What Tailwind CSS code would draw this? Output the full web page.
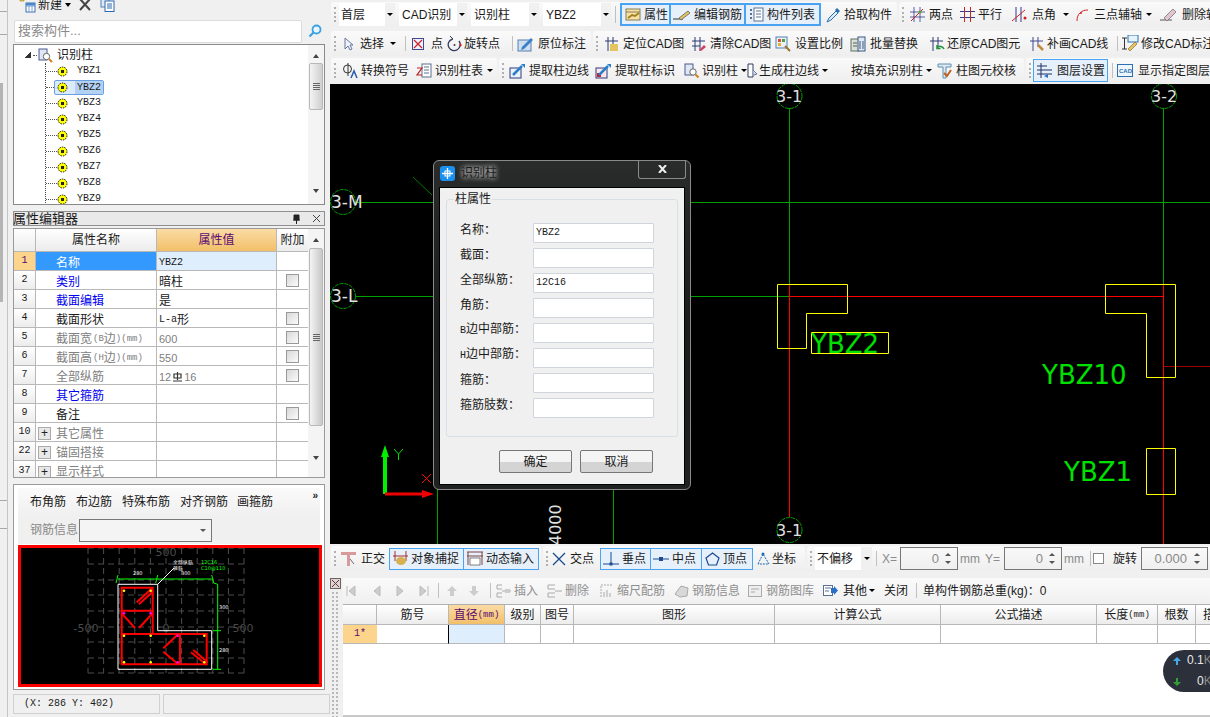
<!DOCTYPE html>
<html>
<head>
<meta charset="utf-8">
<script src="https://cdn.jsdelivr.net/npm/@tailwindcss/browser@4"></script>
<title>识别柱</title>
</head>
<body>
<div class="relative w-[1210px] h-[717px] overflow-hidden flex bg-[#f0f0f0] text-[12px] leading-[16px] text-[#1a1a1a] whitespace-nowrap font-['Liberation_Sans','Noto_Sans_CJK_SC',sans-serif]">

  <!-- far-left strip -->
  <div class="w-[8px] h-full shrink-0 flex flex-col border-r border-[#c4c4c4]">
    <div class="h-[12px] border-b border-[#a8a8a8]"></div>
    <div class="h-[23px] border-b border-[#a8a8a8]"></div>
    <div class="mt-[48px] h-[219px] w-[3px] bg-[#b4b4b4]"></div>
    <div class="mt-[198px] h-[1px] bg-[#a8a8a8]"></div>
    <div class="mt-[27px] h-[1px] bg-[#a8a8a8]"></div>
  </div>

  <!-- left panel -->
  <div class="w-[322px] h-full shrink-0 pl-[5px] pr-[5px] flex flex-col">
    <div class="h-[18px] overflow-hidden">
      <div class="flex items-center -mt-[3px] h-[16px] pl-[5px]">
        <svg class="w-[18px] h-[16px]" viewBox="0 0 18 16"><path d="M2 1h4v3H2z" fill="#e8c840" stroke="#a08020" stroke-width=".6"/><rect x="8" y="6" width="9" height="9" fill="#fff" stroke="#3a70b0"/><path d="M8 9h9M11 9v6M14 9v6" stroke="#7aa0d0"/><rect x="8" y="6" width="9" height="2.5" fill="#4a88c8"/></svg>
        <span class="ml-[2px]">新建</span>
        <span class="ml-[3px] w-0 h-0 border-x-[3px] border-t-[4px] border-x-transparent border-t-black"></span>
        <svg class="ml-[8px] w-[12px] h-[12px]" viewBox="0 0 12 12"><path d="M1 0l10 11M11 0L1 11" stroke="#444" stroke-width="2"/></svg>
        <svg class="ml-[9px] w-[15px] h-[14px]" viewBox="0 0 15 14"><rect x="1" y="0" width="8" height="9" fill="#dfe8f4" stroke="#5580b0"/><rect x="5" y="3" width="9" height="10.500" fill="#fff" stroke="#2a68b0"/><path d="M7 6h5M7 8h5M7 10h5" stroke="#2a68b0"/></svg>
      </div>
    </div>
    <div class="h-[26px] flex items-center">
      <div class="w-[288px] h-[23px] ml-[1px] bg-white border border-[#dcdcdc] rounded-[2px] pl-[3px] flex items-center text-[13px] text-[#8a8a8a]">搜索构件...</div>
      <svg class="ml-[6px] w-[14px] h-[14px]" viewBox="0 0 14 14"><circle cx="8.500" cy="5.500" r="4" fill="#eaf6ff" stroke="#3aa0e0" stroke-width="1.800"/><path d="M5.500 8.500L1.500 12.500" stroke="#3aa0e0" stroke-width="2.200"/></svg>
    </div>

    <!-- tree -->
    <div class="h-[161px] flex bg-white border border-[#8a8a8a] overflow-hidden">
      <div class="w-[295px] flex flex-col pt-[2px]">
        <div class="h-[16px] flex items-center pl-[11px] shrink-0">
          <span class="w-[6px] h-[6px] bg-[linear-gradient(135deg,transparent_50%,#333_50%)]"></span>
          <span class="ml-[2px] w-[4px] border-t border-dotted border-[#555]"></span>
          <svg class="ml-[1px] w-[15px] h-[15px]" viewBox="0 0 15 15"><rect x="1" y="1" width="8" height="11" fill="#dfe6f4" stroke="#4a5a90"/><circle cx="8.500" cy="8.500" r="3.200" fill="#fff" stroke="#666"/><path d="M11 11l3 3" stroke="#d08020" stroke-width="2"/></svg>
          <span class="ml-[4px]">识别柱</span>
        </div>
        <div class="ml-[31px] border-l border-dotted border-[#444] flex flex-col">
          <div class="h-[16px] flex items-center shrink-0"><span class="w-[11px] border-t border-dotted border-[#555]"></span><svg class="w-[11px] h-[11px]" viewBox="0 0 11 11"><circle cx="5.500" cy="5.500" r="4.500" fill="#ffff00" stroke="#111" stroke-dasharray="1.500 1"/><rect x="4" y="4" width="3" height="3" fill="#222"/></svg><span class="ml-[9px] font-['Liberation_Mono'] text-[10px]">YBZ1</span></div>
          <div class="h-[16px] flex items-center shrink-0"><span class="w-[8px] border-t border-dotted border-[#555]"></span><div class="h-[15px] w-[50px] flex items-center rounded-[2px] border border-[#6aa0e0] bg-[#dcebfb]"><svg class="ml-[2px] w-[11px] h-[11px]" viewBox="0 0 11 11"><circle cx="5.500" cy="5.500" r="4.500" fill="#ffff00" stroke="#111" stroke-dasharray="1.500 1"/><rect x="4" y="4" width="3" height="3" fill="#222"/></svg><span class="ml-[7px] pl-[2px] pr-[2px] h-full bg-[#b3d1f2] font-['Liberation_Mono'] text-[10px] leading-[13px]">YBZ2</span></div></div>
          <div class="h-[16px] flex items-center shrink-0"><span class="w-[11px] border-t border-dotted border-[#555]"></span><svg class="w-[11px] h-[11px]" viewBox="0 0 11 11"><circle cx="5.500" cy="5.500" r="4.500" fill="#ffff00" stroke="#111" stroke-dasharray="1.500 1"/><rect x="4" y="4" width="3" height="3" fill="#222"/></svg><span class="ml-[9px] font-['Liberation_Mono'] text-[10px]">YBZ3</span></div>
          <div class="h-[16px] flex items-center shrink-0"><span class="w-[11px] border-t border-dotted border-[#555]"></span><svg class="w-[11px] h-[11px]" viewBox="0 0 11 11"><circle cx="5.500" cy="5.500" r="4.500" fill="#ffff00" stroke="#111" stroke-dasharray="1.500 1"/><rect x="4" y="4" width="3" height="3" fill="#222"/></svg><span class="ml-[9px] font-['Liberation_Mono'] text-[10px]">YBZ4</span></div>
          <div class="h-[16px] flex items-center shrink-0"><span class="w-[11px] border-t border-dotted border-[#555]"></span><svg class="w-[11px] h-[11px]" viewBox="0 0 11 11"><circle cx="5.500" cy="5.500" r="4.500" fill="#ffff00" stroke="#111" stroke-dasharray="1.500 1"/><rect x="4" y="4" width="3" height="3" fill="#222"/></svg><span class="ml-[9px] font-['Liberation_Mono'] text-[10px]">YBZ5</span></div>
          <div class="h-[16px] flex items-center shrink-0"><span class="w-[11px] border-t border-dotted border-[#555]"></span><svg class="w-[11px] h-[11px]" viewBox="0 0 11 11"><circle cx="5.500" cy="5.500" r="4.500" fill="#ffff00" stroke="#111" stroke-dasharray="1.500 1"/><rect x="4" y="4" width="3" height="3" fill="#222"/></svg><span class="ml-[9px] font-['Liberation_Mono'] text-[10px]">YBZ6</span></div>
          <div class="h-[16px] flex items-center shrink-0"><span class="w-[11px] border-t border-dotted border-[#555]"></span><svg class="w-[11px] h-[11px]" viewBox="0 0 11 11"><circle cx="5.500" cy="5.500" r="4.500" fill="#ffff00" stroke="#111" stroke-dasharray="1.500 1"/><rect x="4" y="4" width="3" height="3" fill="#222"/></svg><span class="ml-[9px] font-['Liberation_Mono'] text-[10px]">YBZ7</span></div>
          <div class="h-[16px] flex items-center shrink-0"><span class="w-[11px] border-t border-dotted border-[#555]"></span><svg class="w-[11px] h-[11px]" viewBox="0 0 11 11"><circle cx="5.500" cy="5.500" r="4.500" fill="#ffff00" stroke="#111" stroke-dasharray="1.500 1"/><rect x="4" y="4" width="3" height="3" fill="#222"/></svg><span class="ml-[9px] font-['Liberation_Mono'] text-[10px]">YBZ8</span></div>
          <div class="h-[16px] flex items-center shrink-0"><span class="w-[11px] border-t border-dotted border-[#555]"></span><svg class="w-[11px] h-[11px]" viewBox="0 0 11 11"><circle cx="5.500" cy="5.500" r="4.500" fill="#ffff00" stroke="#111" stroke-dasharray="1.500 1"/><rect x="4" y="4" width="3" height="3" fill="#222"/></svg><span class="ml-[9px] font-['Liberation_Mono'] text-[10px]">YBZ9</span></div>
        </div>
      </div>
      <div class="w-[16px] bg-[#f4f4f4] flex flex-col items-center">
        <span class="mt-[9px] w-0 h-0 border-x-[3.500px] border-b-[4px] border-x-transparent border-b-[#444]"></span>
        <div class="mt-[5px] w-[14px] h-[47px] rounded-[2px] border border-[#b8b8b8] bg-gradient-to-r from-[#f4f4f4] to-[#cfcfcf] flex flex-col items-center justify-center gap-[1px]"><span class="w-[7px] h-px bg-[#666]"></span><span class="w-[7px] h-px bg-[#666]"></span><span class="w-[7px] h-px bg-[#666]"></span><span class="w-[7px] h-px bg-[#666]"></span></div>
        <span class="mt-[79px] w-0 h-0 border-x-[3.500px] border-t-[4px] border-x-transparent border-t-[#444]"></span>
      </div>
    </div>

    <!-- property header -->
    <div class="mt-[6px] h-[15px] flex items-center border border-[#909090] bg-[#e9e9e9]">
      <span class="text-[13px] leading-[13px] -ml-px">属性编辑器</span>
      <svg class="ml-auto w-[9px] h-[10px]" viewBox="0 0 9 10"><path d="M2 1h5v5H2zM1 6h7M4.500 6v4" fill="#222" stroke="#222"/></svg>
      <svg class="ml-[11px] mr-[3px] w-[9px] h-[9px]" viewBox="0 0 9 9"><path d="M1 1l7 7M8 1L1 8" stroke="#444"/></svg>
    </div>

    <!-- property grid -->
    <div class="mt-[2px] h-[250px] shrink-0 flex bg-white border border-[#9a9a9a] overflow-hidden">
      <div class="w-[294px] grid grid-cols-[22px_121px_120px_31px] grid-rows-[23px_repeat(12,19px)] content-start [&>div:nth-child(4n+2):nth-child(n+5)]:pt-[3px] [&>div:nth-child(4n+3):nth-child(n+5)]:pt-[3px]">
        <div class="bg-gradient-to-b from-white to-[#ececec] border-r border-b border-[#b8b8b8]"></div>
        <div class="bg-gradient-to-b from-white to-[#ececec] border-r border-b border-[#b8b8b8] flex items-center justify-center">属性名称</div>
        <div class="bg-gradient-to-b from-[#fbdca4] to-[#f2bf68] border-r border-b border-[#b8b8b8] flex items-center justify-center text-[#5a0a70]">属性值</div>
        <div class="bg-gradient-to-b from-white to-[#ececec] border-b border-[#b8b8b8] flex items-center justify-center">附加</div>

        <div class="bg-[#fdd48b] border-r border-b border-[#b8b8b8] flex items-center justify-center text-[#5a0a70] font-['Liberation_Mono'] text-[10px]">1</div>
        <div class="bg-[#3399ff] border-r border-b border-[#b8b8b8] flex items-center pl-[20px] text-white">名称</div>
        <div class="bg-[#dfeefc] border-r border-b border-[#b8b8b8] flex items-center pl-[2px] font-['Liberation_Mono'] text-[10px]">YBZ2</div>
        <div class="border-b border-[#b8b8b8]"></div>

        <div class="bg-gradient-to-b from-white to-[#ececec] border-r border-b border-[#b8b8b8] flex items-center justify-center font-['Liberation_Mono'] text-[10px]">2</div>
        <div class="border-r border-b border-[#b8b8b8] flex items-center pl-[20px] text-[#0000f0]">类别</div>
        <div class="border-r border-b border-[#b8b8b8] flex items-center pl-[2px]">暗柱</div>
        <div class="border-b border-[#b8b8b8] flex items-center justify-center"><span class="w-[13px] h-[13px] border border-[#999] bg-gradient-to-br from-[#d8d8d8] to-[#fbfbfb]"></span></div>

        <div class="bg-gradient-to-b from-white to-[#ececec] border-r border-b border-[#b8b8b8] flex items-center justify-center font-['Liberation_Mono'] text-[10px]">3</div>
        <div class="border-r border-b border-[#b8b8b8] flex items-center pl-[20px] text-[#0000f0]">截面编辑</div>
        <div class="border-r border-b border-[#b8b8b8] flex items-center pl-[2px]">是</div>
        <div class="border-b border-[#b8b8b8]"></div>

        <div class="bg-gradient-to-b from-white to-[#ececec] border-r border-b border-[#b8b8b8] flex items-center justify-center font-['Liberation_Mono'] text-[10px]">4</div>
        <div class="border-r border-b border-[#b8b8b8] flex items-center pl-[20px]">截面形状</div>
        <div class="border-r border-b border-[#b8b8b8] flex items-center pl-[2px]"><span class="font-['Liberation_Mono'] text-[10px]">L-a</span>形</div>
        <div class="border-b border-[#b8b8b8] flex items-center justify-center"><span class="w-[13px] h-[13px] border border-[#999] bg-gradient-to-br from-[#d8d8d8] to-[#fbfbfb]"></span></div>

        <div class="bg-gradient-to-b from-white to-[#ececec] border-r border-b border-[#b8b8b8] flex items-center justify-center font-['Liberation_Mono'] text-[10px]">5</div>
        <div class="border-r border-b border-[#b8b8b8] flex items-center pl-[20px] text-[#808080]">截面宽<span class="font-['Liberation_Mono'] text-[9px] ml-[1px]">(B</span>边<span class="font-['Liberation_Mono'] text-[9px]">)(mm)</span></div>
        <div class="border-r border-b border-[#b8b8b8] flex items-center pl-[2px] text-[#808080] text-[11px]">600</div>
        <div class="border-b border-[#b8b8b8] flex items-center justify-center"><span class="w-[13px] h-[13px] border border-[#999] bg-gradient-to-br from-[#d8d8d8] to-[#fbfbfb]"></span></div>

        <div class="bg-gradient-to-b from-white to-[#ececec] border-r border-b border-[#b8b8b8] flex items-center justify-center font-['Liberation_Mono'] text-[10px]">6</div>
        <div class="border-r border-b border-[#b8b8b8] flex items-center pl-[20px] text-[#808080]">截面高<span class="font-['Liberation_Mono'] text-[9px] ml-[1px]">(H</span>边<span class="font-['Liberation_Mono'] text-[9px]">)(mm)</span></div>
        <div class="border-r border-b border-[#b8b8b8] flex items-center pl-[2px] text-[#808080] text-[11px]">550</div>
        <div class="border-b border-[#b8b8b8] flex items-center justify-center"><span class="w-[13px] h-[13px] border border-[#999] bg-gradient-to-br from-[#d8d8d8] to-[#fbfbfb]"></span></div>

        <div class="bg-gradient-to-b from-white to-[#ececec] border-r border-b border-[#b8b8b8] flex items-center justify-center font-['Liberation_Mono'] text-[10px]">7</div>
        <div class="border-r border-b border-[#b8b8b8] flex items-center pl-[20px] text-[#808080]">全部纵筋</div>
        <div class="border-r border-b border-[#b8b8b8] flex items-center pl-[2px] text-[#808080] text-[11px]">12<svg class="mx-[2px] w-[9px] h-[10px]" viewBox="0 0 9 10"><path d="M1 2h7v4H1zM4.500 0v8M0 9h9" fill="none" stroke="#333" stroke-width="1.200"/></svg>16</div>
        <div class="border-b border-[#b8b8b8] flex items-center justify-center"><span class="w-[13px] h-[13px] border border-[#999] bg-gradient-to-br from-[#d8d8d8] to-[#fbfbfb]"></span></div>

        <div class="bg-gradient-to-b from-white to-[#ececec] border-r border-b border-[#b8b8b8] flex items-center justify-center font-['Liberation_Mono'] text-[10px]">8</div>
        <div class="border-r border-b border-[#b8b8b8] flex items-center pl-[20px] text-[#0000f0]">其它箍筋</div>
        <div class="border-r border-b border-[#b8b8b8]"></div>
        <div class="border-b border-[#b8b8b8]"></div>

        <div class="bg-gradient-to-b from-white to-[#ececec] border-r border-b border-[#b8b8b8] flex items-center justify-center font-['Liberation_Mono'] text-[10px]">9</div>
        <div class="border-r border-b border-[#b8b8b8] flex items-center pl-[20px]">备注</div>
        <div class="border-r border-b border-[#b8b8b8]"></div>
        <div class="border-b border-[#b8b8b8] flex items-center justify-center"><span class="w-[13px] h-[13px] border border-[#999] bg-gradient-to-br from-[#d8d8d8] to-[#fbfbfb]"></span></div>

        <div class="bg-gradient-to-b from-white to-[#ececec] border-r border-b border-[#b8b8b8] flex items-center justify-center font-['Liberation_Mono'] text-[10px]">10</div>
        <div class="border-r border-b border-[#b8b8b8] flex items-center pl-[2px] text-[#808080]"><span class="mr-[5px] w-[13px] h-[13px] border border-[#aaa] bg-[#e8e8e8] text-[#222] flex items-center justify-center leading-[11px]">+</span>其它属性</div>
        <div class="border-r border-b border-[#b8b8b8]"></div>
        <div class="border-b border-[#b8b8b8]"></div>

        <div class="bg-gradient-to-b from-white to-[#ececec] border-r border-b border-[#b8b8b8] flex items-center justify-center font-['Liberation_Mono'] text-[10px]">22</div>
        <div class="border-r border-b border-[#b8b8b8] flex items-center pl-[2px] text-[#808080]"><span class="mr-[5px] w-[13px] h-[13px] border border-[#aaa] bg-[#e8e8e8] text-[#222] flex items-center justify-center leading-[11px]">+</span>锚固搭接</div>
        <div class="border-r border-b border-[#b8b8b8]"></div>
        <div class="border-b border-[#b8b8b8]"></div>

        <div class="bg-gradient-to-b from-white to-[#ececec] border-r border-[#b8b8b8] flex items-center justify-center font-['Liberation_Mono'] text-[10px]">37</div>
        <div class="border-r border-[#b8b8b8] flex items-center pl-[2px] text-[#808080]"><span class="mr-[5px] w-[13px] h-[13px] border border-[#aaa] bg-[#e8e8e8] text-[#222] flex items-center justify-center leading-[11px]">+</span>显示样式</div>
        <div class="border-r border-[#b8b8b8]"></div>
        <div></div>
      </div>
      <div class="w-[16px] bg-[#f4f4f4] flex flex-col items-center">
        <span class="mt-[9px] w-0 h-0 border-x-[3.500px] border-b-[4px] border-x-transparent border-b-[#444]"></span>
        <div class="mt-[6px] w-[14px] h-[178px] rounded-[2px] border border-[#b8b8b8] bg-gradient-to-r from-[#f4f4f4] to-[#c8c8c8] flex flex-col items-center justify-center gap-[1px]"><span class="w-[7px] h-px bg-[#666]"></span><span class="w-[7px] h-px bg-[#666]"></span><span class="w-[7px] h-px bg-[#666]"></span><span class="w-[7px] h-px bg-[#666]"></span></div>
        <span class="mt-[30px] w-0 h-0 border-x-[3.500px] border-t-[4px] border-x-transparent border-t-[#444]"></span>
      </div>
    </div>

    <!-- rebar preview panel -->
    <div class="mt-[6px] h-[206px] shrink-0 border border-[#9a9a9a] bg-white pt-[3px] px-[4px] flex flex-col">
      <div class="h-[28px] bg-gradient-to-b from-[#fafafa] to-[#f0f0f0] flex items-center relative pl-[12px]">
        <span class="w-[43px]">布角筋</span><span class="ml-[3px] w-[43px]">布边筋</span><span class="ml-[3px] w-[54px]">特殊布筋</span><span class="ml-[4px] w-[54px]">对齐钢筋</span><span class="ml-[3px] w-[40px]">画箍筋</span>
        <span class="absolute right-[2px] top-[2px] text-[10px] leading-[12px] font-bold">»</span>
      </div>
      <div class="h-[28px] flex items-center pl-[12px] bg-[#f0f0f0]">
        <span class="text-[#8a8a8a] w-[49px]">钢筋信息</span>
        <div class="w-[133px] h-[23px] border border-[#777] bg-[#f4f4f4] flex items-center justify-end pr-[5px]"><span class="w-0 h-0 border-x-[3px] border-t-[3px] border-x-transparent border-t-[#555]"></span></div>
      </div>
      <svg class="w-[304px] h-[142px] mt-[1px] block bg-black shrink-0" viewBox="18 545 304 142">
        <g stroke="#4d4d4d" stroke-width="1" stroke-dasharray="6 4" fill="none">
          <path d="M88 548v125M103.600 548v125M119.200 548v125M134.800 548v125M150.400 548v125M166 548v125M181.600 548v125M197.200 548v125M212.800 548v125M228.400 548v125M244 548v125"/>
          <path d="M88 548h157M88 564h157M88 580h157M88 595h157M88 611h157M88 627h157M88 642h157M88 658h157M88 673h157"/>
        </g>
        <g class="font-['DejaVu_Sans']" font-size="11" fill="#4a4a4a" text-anchor="middle">
          <text x="166" y="556">500</text><text x="86" y="632">-500</text><text x="166" y="632">0</text><text x="243" y="632">500</text>
        </g>
        <path d="M118 584.300H157.700V630.700H211.700V669.300H118Z" fill="none" stroke="#fff"/>
        <g stroke="#0f0" fill="none">
          <path d="M118 579H211.700M217.700 584.300V669.300M118 575l-2 8M157.700 575l-2 8M211.700 575l2 8 4 1.300M213 630.700h8M213 669.300h8"/>
        </g>
        <path d="M157.700 584.300L174 568" stroke="#fff"/>
        <g fill="none" stroke="#f00" stroke-width="2">
          <path d="M121.700 587.700H152.700V634H206.700V664.300H121.700Z"/>
          <path d="M121.700 610.700H152.700M121.700 634H152.700M180 634V664.300"/>
          <path d="M136.700 602.300L152.700 587.700M139 604.300L152.700 591.700M121.700 613.300L135 628M139 628L152.700 613.300M163.300 648.300L178.300 634M163.300 651.700L178.300 664.300M191 652.300L206.700 665M193.300 650L207.700 662.300"/>
        </g>
        <g fill="#ff0">
          <circle cx="124" cy="590.700" r="1.300"/><circle cx="150.700" cy="590.700" r="1.300"/><circle cx="124" cy="635.700" r="1.300"/><circle cx="150.700" cy="635.700" r="1.300"/><circle cx="124" cy="662.300" r="1.300"/><circle cx="150.700" cy="662.300" r="1.300"/><circle cx="204.300" cy="635.700" r="1.300"/><circle cx="204.300" cy="662.300" r="1.300"/>
        </g>
        <g fill="#f0f">
          <circle cx="124" cy="613.300" r="1.300"/><circle cx="150.700" cy="613.300" r="1.300"/><circle cx="177.700" cy="635.700" r="1.300"/><circle cx="177.700" cy="662.300" r="1.300"/>
        </g>
        <g class="font-['DejaVu_Sans']" font-size="5" fill="#fff">
          <text x="133" y="575">280</text><text x="181" y="575">300</text><text x="219" y="609">300</text><text x="219" y="652">280</text>
          <text x="173" y="564">全部纵筋</text><text x="173" y="570">箍筋</text>
        </g>
        <g class="font-['DejaVu_Sans']" font-size="5" fill="#0f0"><text x="201" y="564">12C16</text><text x="201" y="570">C10@110</text></g>
        <rect x="19.500" y="546.500" width="301" height="139" fill="none" stroke="#f00" stroke-width="3"/>
      </svg>
    </div>

    <!-- status -->
    <div class="mt-[4px] h-[20px] shrink-0 flex gap-[3px] -mr-[5px]">
      <div class="w-[147px] border border-[#d0d0d0] pl-[10px] flex items-center font-['Liberation_Mono'] text-[10px]">(X: 286 Y: 402)</div>
      <div class="flex-1 border border-[#d0d0d0]"></div>
    </div>
  </div>

  <!-- right side -->
  <div class="w-[880px] h-full flex flex-col">
    <!-- row 1 -->
    <div class="h-[31px] pt-[2px] pl-[1px] flex gap-[2px]">
      <div class="w-[566px] h-[25px] flex items-center rounded-[3px] bg-gradient-to-b from-[#fafafa] to-[#eeeeee]">
        <div class="w-[8px] flex justify-center"><span class="w-[2px] h-[15px] border-l-2 border-dotted border-[#b0b0b0]"></span></div>
        <div class="w-[56px] h-[23px] flex items-center bg-white"><span class="flex-1 pl-[2px]">首层</span><span class="w-[10px] h-full bg-[#f0f0f0] flex items-center justify-center"><span class="w-0 h-0 border-x-[3px] border-t-[3px] border-x-transparent border-t-black"></span></span></div>
        <div class="ml-[4px] w-[68px] h-[23px] flex items-center bg-white"><span class="flex-1 pl-[3px]">CAD识别</span><span class="w-[10px] h-full bg-[#f0f0f0] flex items-center justify-center"><span class="w-0 h-0 border-x-[3px] border-t-[3px] border-x-transparent border-t-black"></span></span></div>
        <div class="ml-[4px] w-[68px] h-[23px] flex items-center bg-white"><span class="flex-1 pl-[3px]">识别柱</span><span class="w-[10px] h-full bg-[#f0f0f0] flex items-center justify-center"><span class="w-0 h-0 border-x-[3px] border-t-[3px] border-x-transparent border-t-black"></span></span></div>
        <div class="ml-[4px] w-[68px] h-[23px] flex items-center bg-white"><span class="flex-1 pl-[3px]">YBZ2</span><span class="w-[10px] h-full bg-[#f0f0f0] flex items-center justify-center"><span class="w-0 h-0 border-x-[3px] border-t-[3px] border-x-transparent border-t-black"></span></span></div>
        <div class="w-[9px] flex justify-center"><span class="w-px h-[17px] bg-[#c0c0c0]"></span></div>
        <div class="w-[51px] h-[23px] flex items-center gap-[3px] pl-[3px] border-2 border-[#4aa3f2] bg-[#e6f0fa]"><svg class="w-[16px] h-[15px] shrink-0" viewBox="0 0 16 15"><rect x="1" y="2" width="14" height="11" fill="#f6e2a8" stroke="#8a7a50"/><path d="M1 5h14" stroke="#8a7a50"/><path d="M3 11l4-3 3 1 4-3" stroke="#a08020" fill="none" stroke-width="2"/></svg><span>属性</span></div>
        <div class="w-[75px] h-[23px] flex items-center gap-[3px] pl-[2px] border-2 border-l-0 border-[#4aa3f2] bg-[#e6f0fa]"><svg class="w-[18px] h-[14px] shrink-0" viewBox="0 0 18 14"><path d="M0 11h10" stroke="#333"/><path d="M6 10L15 3l2 2-9 7z" fill="#e0c060" stroke="#555" stroke-width=".7"/></svg><span>编辑钢筋</span></div>
        <div class="w-[75px] h-[23px] flex items-center gap-[3px] pl-[3px] border-2 border-l-0 border-[#4aa3f2] bg-[#e6f0fa]"><svg class="w-[15px] h-[15px] shrink-0" viewBox="0 0 15 15"><rect x="5" y="1" width="9" height="13" fill="#fff" stroke="#5a7090"/><path d="M7 4h5M7 7h5M7 10h5" stroke="#5a7090"/><path d="M1 3h2M1 7h2M1 11h2" stroke="#5a7090" stroke-width="2"/></svg><span>构件列表</span></div>
        <div class="w-[76px] pl-[5px] flex items-center gap-[3px]"><svg class="w-[15px] h-[16px] shrink-0" viewBox="0 0 15 16"><path d="M1 15l2-4 7-7 2 2-7 7z" fill="#d8ecfa" stroke="#2a70b0"/><path d="M9 3l2-2 3 3-2 2z" fill="#2a70b0"/></svg><span>拾取构件</span></div>
      </div>
      <div class="flex-1 h-[25px] flex items-center rounded-l-[3px] bg-gradient-to-b from-[#fafafa] to-[#eeeeee] overflow-hidden">
        <div class="w-[8px] flex justify-center shrink-0"><span class="w-[2px] h-[15px] border-l-2 border-dotted border-[#b0b0b0]"></span></div>
        <div class="w-[53px] shrink-0 pl-[3px] flex items-center gap-[4px]"><svg class="w-[15px] h-[15px] shrink-0" viewBox="0 0 15 15"><path d="M4 0v15M10 0v15M0 5h15M0 10h15" stroke="#303a90" stroke-width=".8"/><path d="M1 14L13 2" stroke="#d02020"/><circle cx="10" cy="5" r="1.500" fill="#60a030"/></svg><span>两点</span></div>
        <div class="w-[51px] shrink-0 flex items-center gap-[3px]"><svg class="w-[15px] h-[15px] shrink-0" viewBox="0 0 15 15"><path d="M0 4.500h15M0 10.500h15" stroke="#303a90"/><path d="M4.500 0v15M10.500 0v15" stroke="#d02020"/></svg><span>平行</span></div>
        <div class="w-[64px] shrink-0 pl-px flex items-center gap-[5px]"><svg class="w-[15px] h-[15px] shrink-0" viewBox="0 0 15 15"><path d="M4 0v15M9 0v15" stroke="#303a90"/><path d="M0 14L13 3" stroke="#d02020"/><circle cx="13" cy="11" r="1.500" fill="#d02020"/></svg><span>点角</span><span class="ml-[2px] w-0 h-0 border-x-[3px] border-t-[3px] border-x-transparent border-t-black"></span></div>
        <div class="w-[85px] shrink-0 flex items-center gap-[4px]"><svg class="w-[15px] h-[15px] shrink-0" viewBox="0 0 15 15"><path d="M2 14C2 7 6 3 13 3" stroke="#d02020" fill="none"/><circle cx="6" cy="6" r="1" fill="#d02020"/></svg><span>三点辅轴</span><span class="w-0 h-0 border-x-[3px] border-t-[3px] border-x-transparent border-t-black"></span></div>
        <div class="flex items-center gap-[4px]"><svg class="w-[18px] h-[15px] shrink-0" viewBox="0 0 18 15"><path d="M0 13h12" stroke="#555"/><path d="M4 11l9-9 3 3-9 9z" fill="#e4c4d0" stroke="#666" stroke-width=".7"/></svg><span>删除辅轴</span></div>
      </div>
    </div>

    <!-- row 2 -->
    <div class="h-[27px] pl-[1px] flex gap-[2px]">
      <div class="w-[260px] h-[25px] flex items-center rounded-[3px] bg-gradient-to-b from-[#fafafa] to-[#eeeeee]">
        <div class="w-[8px] flex justify-center"><span class="w-[2px] h-[15px] border-l-2 border-dotted border-[#b0b0b0]"></span></div>
        <div class="w-[62px] pl-[4px] flex items-center gap-[6px]"><svg class="w-[11px] h-[14px] shrink-0" viewBox="0 0 11 14"><path d="M2 1v11l3-3 2 4 2-1-2-4h3z" fill="#eef2fa" stroke="#6a78a0"/></svg><span>选择</span><span class="w-0 h-0 border-x-[3px] border-t-[3px] border-x-transparent border-t-black"></span></div>
        <div class="w-[9px] flex justify-center"><span class="w-px h-[15px] bg-[#c0c0c0]"></span></div>
        <div class="w-[37px] pl-[2px] flex items-center gap-[7px]"><svg class="w-[12px] h-[12px] shrink-0" viewBox="0 0 12 12"><rect x=".5" y=".5" width="11" height="11" fill="#eef2fa" stroke="#404a90"/><path d="M2 2l8 8M10 2l-8 8" stroke="#d02030" stroke-width="1.200"/></svg><span>点</span></div>
        <div class="w-[62px] flex items-center gap-[1px]"><svg class="w-[16px] h-[16px] shrink-0" viewBox="0 0 16 16"><path d="M5 3A6 6 0 1 0 12 5" fill="none" stroke="#303a60" stroke-width="1.300"/><path d="M3 0l3 3-3 2" fill="none" stroke="#303a60"/><circle cx="7.500" cy="9" r="1" fill="#303a60"/><path d="M12 9h3M13.500 7.500v3" stroke="#d02020"/></svg><span>旋转点</span></div>
        <div class="w-[6px] flex justify-center"><span class="w-px h-[15px] bg-[#c0c0c0]"></span></div>
        <div class="w-[76px] pl-[2px] flex items-center gap-[4px]"><svg class="w-[17px] h-[16px] shrink-0" viewBox="0 0 17 16"><rect x="1" y="4" width="13" height="11" fill="#cfdff0" stroke="#5580b0"/><path d="M5 11L14 2l2 2-9 9-3 1z" fill="#3a80c8"/></svg><span>原位标注</span></div>
      </div>
      <div class="flex-1 h-[25px] flex items-center rounded-l-[3px] bg-gradient-to-b from-[#fafafa] to-[#eeeeee] overflow-hidden">
        <div class="w-[8px] flex justify-center shrink-0"><span class="w-[2px] h-[15px] border-l-2 border-dotted border-[#b0b0b0]"></span></div>
        <div class="w-[87px] shrink-0 pl-[3px] flex items-center gap-[4px]"><svg class="w-[15px] h-[16px] shrink-0" viewBox="0 0 15 16"><path d="M1 5h13M4 1v14M9 1v14" stroke="#2a3a70"/><rect x="6" y="8" width="8" height="7" fill="#e4c460"/></svg><span>定位CAD图</span></div>
        <div class="w-[87px] shrink-0 pl-[3px] flex items-center gap-[4px]"><svg class="w-[15px] h-[16px] shrink-0" viewBox="0 0 15 16"><path d="M1 5h13M4 1v14M9 1v14M1 10h8" stroke="#2a3a70"/><path d="M8 14l5-5 2 2-5 4z" fill="#d04060"/></svg><span>清除CAD图</span></div>
        <div class="w-[75px] shrink-0 flex items-center gap-[4px]"><svg class="w-[16px] h-[16px] shrink-0" viewBox="0 0 16 16"><rect x="1" y="1" width="11" height="11" fill="#eaf2fa" stroke="#5580b0"/><rect x="3" y="3" width="3" height="3" fill="#e05030"/><rect x="7" y="3" width="3" height="3" fill="#50a050"/><rect x="3" y="7" width="3" height="3" fill="#e8b030"/><path d="M10 10l5 5" stroke="#a07030" stroke-width="2"/></svg><span>设置比例</span></div>
        <div class="w-[76px] shrink-0 flex items-center gap-[4px]"><svg class="w-[16px] h-[16px] shrink-0" viewBox="0 0 16 16"><rect x="1" y="3" width="8" height="12" fill="#d8e0d8" stroke="#607060"/><path d="M3 7h4M3 10h4" stroke="#506050"/><rect x="8" y="1" width="7" height="14" fill="#dfe8f4" stroke="#3a5a80"/><path d="M10 5v8M13 5v8" stroke="#3a5a80"/></svg><span>批量替换</span></div>
        <div class="w-[100px] shrink-0 pl-[3px] flex items-center gap-[2px]"><svg class="w-[16px] h-[16px] shrink-0" viewBox="0 0 16 16"><path d="M1 5h13M4 1v14M9 1v9" stroke="#2a3a70"/><path d="M8 12a4 4 0 0 1 7 1M8 9v3.500h3.500" stroke="#209040" fill="none" stroke-width="1.500"/></svg><span>还原CAD图元</span></div>
        <div class="w-[88px] shrink-0 pl-[3px] flex items-center gap-[2px]"><svg class="w-[16px] h-[16px] shrink-0" viewBox="0 0 16 16"><path d="M1 5h13M4 1v14M9 1v10" stroke="#404a90"/><path d="M9 9l5 5" stroke="#c08a40" stroke-width="2.500"/></svg><span>补画CAD线</span></div>
        <div class="w-[6px] shrink-0 flex justify-center"><span class="w-px h-[15px] bg-[#c0c0c0]"></span></div>
        <div class="shrink-0 pl-[1px] flex items-center gap-[2px]"><svg class="w-[18px] h-[17px] shrink-0" viewBox="0 0 18 17"><path d="M1 3h5M3.500 3v11M1 14h5" stroke="#333"/><rect x="7" y="0" width="10" height="7" fill="#e8f2fb" stroke="#2a70b0"/><path d="M7 14l7-7 2 2-7 7z" fill="#e4c460" stroke="#806020" stroke-width=".6"/></svg><span>修改CAD标注</span></div>
      </div>
    </div>

    <!-- row 3 -->
    <div class="h-[26px] pl-[1px] flex gap-[2px]">
      <div class="w-[166px] h-[25px] flex items-center rounded-[3px] bg-gradient-to-b from-[#fafafa] to-[#eeeeee]">
        <div class="w-[8px] flex justify-center"><span class="w-[2px] h-[15px] border-l-2 border-dotted border-[#b0b0b0]"></span></div>
        <div class="w-[74px] pl-[3px] flex items-center gap-[3px]"><svg class="w-[16px] h-[16px] shrink-0" viewBox="0 0 16 16"><ellipse cx="5.500" cy="6" rx="4" ry="4" fill="none" stroke="#333"/><path d="M6 0v13" stroke="#333"/><path d="M9 15l3-7 3 7" fill="none" stroke="#2a5ab0" stroke-width="1.500"/></svg><span>转换符号</span></div>
        <div class="w-[84px] pl-[3px] flex items-center gap-[3px]"><svg class="w-[16px] h-[15px] shrink-0" viewBox="0 0 16 15"><rect x="6" y="1" width="9" height="13" fill="#fff" stroke="#5a7090"/><path d="M8 4h5M8 7h5M8 10h5" stroke="#5a7090"/><path d="M1 5h5L1 12h5" fill="none" stroke="#c02020" stroke-width="1.200"/></svg><span>识别柱表</span><span class="ml-[1px] w-0 h-0 border-x-[3px] border-t-[3px] border-x-transparent border-t-black"></span></div>
      </div>
      <div class="w-[525px] h-[25px] flex items-center rounded-[3px] bg-gradient-to-b from-[#fafafa] to-[#eeeeee]">
        <div class="w-[8px] flex justify-center"><span class="w-[2px] h-[15px] border-l-2 border-dotted border-[#b0b0b0]"></span></div>
        <div class="w-[85px] pl-[2px] flex items-center gap-[3px]"><svg class="w-[17px] h-[16px] shrink-0" viewBox="0 0 17 16"><rect x="1" y="5" width="11" height="10" fill="#eaf2fa" stroke="#303a80"/><path d="M4 12L13 3" stroke="#2a80c8" stroke-width="2.500"/><path d="M12 1h4v4" fill="#2a80c8"/></svg><span>提取柱边线</span></div>
        <div class="w-[89px] pl-[3px] flex items-center gap-[3px]"><svg class="w-[17px] h-[16px] shrink-0" viewBox="0 0 17 16"><rect x="1" y="5" width="11" height="10" fill="#fae8ea" stroke="#303a80"/><rect x="2" y="10" width="4" height="4" fill="#c02030"/><path d="M4 12L13 3" stroke="#2a80c8" stroke-width="2.500"/><path d="M12 1h4v4" fill="#2a80c8"/></svg><span>提取柱标识</span></div>
        <div class="w-[64px] pl-[3px] flex items-center gap-[2px]"><svg class="w-[16px] h-[16px] shrink-0" viewBox="0 0 16 16"><rect x="1" y="1" width="8" height="11" fill="#dfe6f4" stroke="#4a5a90"/><circle cx="9" cy="9" r="3.200" fill="#fff" stroke="#666"/><path d="M11.500 11.500l3 3" stroke="#d08020" stroke-width="2"/></svg><span>识别柱</span><span class="ml-[1px] w-0 h-0 border-x-[3px] border-t-[3px] border-x-transparent border-t-black"></span></div>
        <div class="w-[100px] pl-[2px] flex items-center gap-[1px]"><svg class="w-[11px] h-[15px] shrink-0" viewBox="0 0 11 15"><path d="M1 1h5v13H1z" fill="#fff" stroke="#303a60"/><path d="M6 7l4 4-3 1" fill="#cfdff0" stroke="#6a78a0"/></svg><span>生成柱边线</span><span class="ml-[2px] w-0 h-0 border-x-[3px] border-t-[3px] border-x-transparent border-t-black"></span></div>
        <div class="w-[90px] pl-[6px] flex items-center gap-[2px]"><span>按填充识别柱</span></div>
        <div class="-ml-[9px] w-[9px] flex items-center"><span class="w-0 h-0 border-x-[3px] border-t-[3px] border-x-transparent border-t-black"></span></div>
        <div class="w-[89px] pl-[2px] flex items-center gap-[4px]"><svg class="w-[15px] h-[16px] shrink-0" viewBox="0 0 15 16"><path d="M1 1h13v3H9v11H6V4H1z" fill="#dfe8f0" stroke="#5a90b0"/><path d="M7 10l3 3 4-6" fill="none" stroke="#c06020" stroke-width="2"/></svg><span>柱图元校核</span></div>
      </div>
      <div class="flex-1 h-[25px] flex items-center rounded-l-[3px] bg-gradient-to-b from-[#fafafa] to-[#eeeeee] overflow-hidden">
        <div class="w-[7px] flex justify-center shrink-0"><span class="w-[2px] h-[15px] border-l-2 border-dotted border-[#b0b0b0]"></span></div>
        <div class="w-[75px] h-[23px] shrink-0 flex items-center gap-[5px] pl-[3px] border border-[#4aa3f2] bg-[#e6f0fa]"><svg class="w-[15px] h-[15px] shrink-0" viewBox="0 0 15 15"><path d="M4 0v15" stroke="#203060"/><path d="M0 3h10M0 7h15M0 11h15" stroke="#203060"/><path d="M7 13l4-2v4z" fill="#2a70c0"/></svg><span>图层设置</span></div>
        <div class="w-[9px] shrink-0 flex justify-center"><span class="w-px h-[15px] bg-[#c0c0c0]"></span></div>
        <div class="shrink-0 flex items-center gap-[3px]"><svg class="w-[16px] h-[13px] shrink-0" viewBox="0 0 16 13"><rect x=".5" y=".5" width="15" height="12" fill="#eef6fd" stroke="#2a70b0"/></svg><span class="-ml-[18px] w-[15px] text-[6px] leading-[10px] font-bold text-[#2a70b0] text-center">CAD</span><span class="ml-[2px]">显示指定图层</span></div>
      </div>
    </div>

    <!-- CAD canvas -->
    <div class="h-[460px] bg-black shrink-0 overflow-hidden">
      <svg class="block w-[880px] h-[460px]" viewBox="330 84 880 460">
        <g fill="none" stroke="#00a000" stroke-width="1">
          <path d="M356 202.500H1210M356 296.500H789.500"/>
          <path d="M789.500 108V284M1163.500 108V284"/>
          <path d="M437.500 430V544M613.500 430V544"/>
          <path d="M413 177L432 195" stroke="#007a00"/>
          <circle cx="343" cy="202" r="12.500" stroke-dasharray="4 1"/><circle cx="343" cy="296" r="12.500" stroke-dasharray="4 1"/>
          <circle cx="789.500" cy="96" r="12.500" stroke-dasharray="4 1"/><circle cx="1164" cy="96" r="12.500" stroke-dasharray="4 1"/>
          <circle cx="789.500" cy="530" r="12.500" stroke-dasharray="4 1"/>
        </g>
        <g fill="none" stroke="#ff0000" stroke-width="1">
          <path d="M789.500 296.500H1163.500M789.500 284V517M1163.500 284V544"/>
          <path d="M422 474L431 483M431 474L422 483"/>
        </g>
        <path d="M1163.500 366.500H1210" stroke="#a00000"/>
        <g fill="none" stroke="#ffff00" stroke-width="1">
          <path d="M777.500 284.500H847.500V313.500H806.500V348.500H777.500Z"/>
          <path d="M811.500 332.500H888.500V353.500H811.500Z"/>
          <path d="M1105.500 284.500H1175.500V377.500H1146.500V313.500H1105.500Z"/>
          <path d="M1146.500 448.500H1175.500V494.500H1146.500Z"/>
        </g>
        <g class="font-['DejaVu_Sans']" font-size="26" fill="#00e000">
          <text x="811" y="353">YBZ2</text><text x="1042" y="384">YBZ10</text><text x="1064" y="481">YBZ1</text>
        </g>
        <g class="font-['DejaVu_Sans']" font-size="17" fill="#e0e0e0">
          <text x="331" y="208">3-M</text><text x="331" y="302">3-L</text>
          <text x="776" y="102" font-size="16">3-1</text><text x="1151" y="102" font-size="16">3-2</text>
          <text x="776" y="536" font-size="16">3-1</text>
          <text transform="translate(561 545) rotate(-90)" font-size="16" fill="#e0e0e0">4000</text>
        </g>
        <path d="M385 445l-4 12h2V494h4V457H389z" fill="#00f000"/>
        <path d="M385 492.500H422V490l12 4-12 4v-2.500H385z" fill="#f00000"/>
        <path d="M394 449l4.500 5 4.500-5M398.500 454v6" stroke="#00e000" fill="none"/>
      </svg>
    </div>

    <!-- snap toolbar -->
    <div class="h-[28px] pt-[2px] pl-[1px] flex gap-[2px] shrink-0">
      <div class="w-[210px] h-[25px] flex items-center rounded-[3px] bg-gradient-to-b from-[#fafafa] to-[#eeeeee]">
        <div class="w-[8px] flex justify-center"><span class="w-[2px] h-[15px] border-l-2 border-dotted border-[#b0b0b0]"></span></div>
        <div class="w-[50px] pl-[2px] flex items-center gap-[4px]"><svg class="w-[16px] h-[15px] shrink-0" viewBox="0 0 16 15"><path d="M0 1h15v3H9v11H6V4H0z" fill="#d89a9a"/><path d="M9 8l4 5" stroke="#667"/></svg><span>正交</span></div>
        <div class="w-[75px] h-[22px] flex items-center gap-[3px] pl-[3px] border border-[#4aa3f2] bg-[#e6f0fa]"><svg class="w-[15px] h-[15px] shrink-0" viewBox="0 0 15 15"><path d="M2 0v10M13 0v10M0 5h15" stroke="#a03030"/><ellipse cx="8" cy="10" rx="5" ry="4" fill="#d8b050"/></svg><span>对象捕捉</span></div>
        <div class="w-[75px] h-[22px] flex items-center gap-[3px] pl-[3px] border border-l-0 border-[#4aa3f2] bg-[#e6f0fa]"><svg class="w-[16px] h-[15px] shrink-0" viewBox="0 0 16 15"><path d="M0 1h16M0 5h16" stroke="#804040"/><path d="M1 1v13M15 1v13" stroke="#804040"/><rect x="3" y="7" width="10" height="7" fill="#fff" stroke="#333" stroke-width=".6"/></svg><span>动态输入</span></div>
      </div>
      <div class="w-[262px] h-[25px] flex items-center rounded-[3px] bg-gradient-to-b from-[#fafafa] to-[#eeeeee]">
        <div class="w-[7px] flex justify-center"><span class="w-[2px] h-[15px] border-l-2 border-dotted border-[#b0b0b0]"></span></div>
        <div class="w-[50px] pl-[2px] flex items-center gap-[4px]"><svg class="w-[14px] h-[14px] shrink-0" viewBox="0 0 14 14"><path d="M1 1l12 12M13 1L1 13" stroke="#1a4a90" stroke-width="1.300"/></svg><span>交点</span></div>
        <div class="w-[51px] h-[22px] flex items-center gap-[3px] pl-[2px] border border-[#4aa3f2] bg-[#e6f0fa]"><svg class="w-[16px] h-[14px] shrink-0" viewBox="0 0 16 14"><path d="M8 0v12M0 12h16" stroke="#1a4a90"/><rect x="6.500" y="10.500" width="3" height="3" fill="#1a4a90"/></svg><span>垂点</span></div>
        <div class="w-[51px] h-[22px] flex items-center gap-[3px] pl-[2px] border border-l-0 border-[#4aa3f2] bg-[#e6f0fa]"><svg class="w-[16px] h-[10px] shrink-0" viewBox="0 0 16 10"><path d="M0 5h16" stroke="#1a4a90"/><rect x="6" y="3" width="4" height="4" fill="#1a4a90"/></svg><span>中点</span></div>
        <div class="w-[51px] h-[22px] flex items-center gap-[3px] pl-[3px] border border-l-0 border-[#4aa3f2] bg-[#e6f0fa]"><svg class="w-[15px] h-[14px] shrink-0" viewBox="0 0 15 14"><path d="M7.500 1L14 6l-2.500 7h-8L1 6z" fill="none" stroke="#1a4a90" stroke-width="1.200"/></svg><span>顶点</span></div>
        <div class="w-[52px] pl-[3px] flex items-center gap-[1px]"><svg class="w-[15px] h-[15px] shrink-0" viewBox="0 0 15 15"><path d="M2 13L7 3l6 10z" fill="none" stroke="#1a6ab0" stroke-dasharray="2 1"/><circle cx="7" cy="3" r="1.500" fill="#1a6ab0"/></svg><span>坐标</span></div>
      </div>
      <div class="flex-1 h-[25px] flex items-center rounded-l-[3px] bg-gradient-to-b from-[#fafafa] to-[#eeeeee] overflow-hidden text-[#8a8a8a]">
        <div class="w-[8px] flex justify-center shrink-0"><span class="w-[2px] h-[15px] border-l-2 border-dotted border-[#b0b0b0]"></span></div>
        <div class="w-[57px] h-[23px] shrink-0 flex items-center bg-white text-[#1a1a1a]"><span class="flex-1 pl-[2px]">不偏移</span><span class="w-[11px] h-full bg-[#f0f0f0] flex items-center justify-center"><span class="w-0 h-0 border-x-[3px] border-t-[3px] border-x-transparent border-t-black"></span></span></div>
        <div class="w-[9px] shrink-0 flex justify-center"><span class="w-px h-[15px] bg-[#c0c0c0]"></span></div>
        <span class="w-[19px] shrink-0 pl-px">X=</span>
        <div class="w-[58px] h-[23px] shrink-0 border border-[#777] flex items-center justify-end"><span class="text-[13px]">0</span><span class="w-[18px] flex flex-col items-center gap-[5px]"><span class="w-0 h-0 border-x-[3px] border-b-[3px] border-x-transparent border-b-[#555]"></span><span class="w-0 h-0 border-x-[3px] border-t-[3px] border-x-transparent border-t-[#555]"></span></span></div>
        <span class="w-[27px] shrink-0 pl-[2px]">mm</span>
        <span class="w-[19px] shrink-0">Y=</span>
        <div class="w-[58px] h-[23px] shrink-0 border border-[#777] flex items-center justify-end"><span class="text-[13px]">0</span><span class="w-[18px] flex flex-col items-center gap-[5px]"><span class="w-0 h-0 border-x-[3px] border-b-[3px] border-x-transparent border-b-[#555]"></span><span class="w-0 h-0 border-x-[3px] border-t-[3px] border-x-transparent border-t-[#555]"></span></span></div>
        <span class="w-[25px] shrink-0 pl-[2px]">mm</span>
        <div class="w-[6px] shrink-0 flex justify-center"><span class="w-px h-[15px] bg-[#c0c0c0]"></span></div>
        <span class="w-[11px] h-[11px] shrink-0 border border-[#888] bg-white"></span>
        <span class="w-[37px] shrink-0 pl-[9px] text-[#1a1a1a]">旋转</span>
        <div class="w-[67px] h-[23px] shrink-0 border border-[#777] flex items-center justify-end"><span class="text-[13px]">0.000</span><span class="w-[20px] flex flex-col items-center gap-[5px]"><span class="w-0 h-0 border-x-[3px] border-b-[3px] border-x-transparent border-b-[#555]"></span><span class="w-0 h-0 border-x-[3px] border-t-[3px] border-x-transparent border-t-[#555]"></span></span></div>
      </div>
    </div>

    <!-- bottom area -->
    <div class="flex-1 flex mt-[6px] min-h-0">
      <div class="w-[13px] shrink-0 flex flex-col items-center">
        <svg class="w-[11px] h-[11px] shrink-0 -ml-[2px]" viewBox="0 0 11 11"><rect x=".5" y=".5" width="10" height="10" fill="#e8d0d0" stroke="#666"/><path d="M2 2l7 7M9 2L2 9" stroke="#444"/></svg>
        <div class="mt-[2px] w-[9px] -ml-[2px] flex-1 bg-[radial-gradient(circle,#b8b8b8_1px,transparent_1.200px)] bg-[length:4px_4px]"></div>
      </div>
      <div class="flex-1 flex flex-col min-w-0">
        <div class="h-[27px] pb-px shrink-0 flex items-center bg-gradient-to-b from-[#fafafa] to-[#f0f0f0] text-[#8f8f8f] border-b border-[#b0b0b0] pl-[3px]">
          <svg class="w-[10px] h-[12px] shrink-0" viewBox="0 0 10 12"><path d="M1 1v10M9 1L3 6l6 5z" stroke="#bbb" fill="#ccc"/></svg>
          <svg class="ml-[16px] w-[10px] h-[12px] shrink-0" viewBox="0 0 10 12"><path d="M8 1L2 6l6 5z" fill="#ccc" stroke="#bbb"/></svg>
          <svg class="ml-[13px] w-[10px] h-[12px] shrink-0" viewBox="0 0 10 12"><path d="M2 1l6 5-6 5z" fill="#ccc" stroke="#bbb"/></svg>
          <svg class="ml-[14px] w-[10px] h-[12px] shrink-0" viewBox="0 0 10 12"><path d="M9 1v10M1 1l6 5-6 5z" stroke="#bbb" fill="#ccc"/></svg>
          <span class="ml-[9px] w-px h-[15px] bg-[#c0c0c0] shrink-0"></span>
          <svg class="ml-[8px] w-[10px] h-[10px] shrink-0" viewBox="0 0 10 10"><path d="M5 0l5 5H7v5H3V5H0z" fill="#ccc"/></svg>
          <svg class="ml-[12px] w-[10px] h-[10px] shrink-0" viewBox="0 0 10 10"><path d="M5 10l5-5H7V0H3v5H0z" fill="#ccc"/></svg>
          <span class="ml-[11px] w-px h-[15px] bg-[#c0c0c0] shrink-0"></span>
          <div class="ml-[5px] w-[51px] flex items-center gap-[2px] shrink-0"><svg class="w-[16px] h-[14px] shrink-0" viewBox="0 0 16 14"><path d="M6 1H1v4h5M6 9H1v4h5M6 7h9" fill="none" stroke="#aaa"/><rect x="9" y="5" width="5" height="4" fill="#ccc"/></svg><span>插入</span></div>
          <div class="w-[53px] flex items-center gap-[2px] shrink-0"><svg class="w-[16px] h-[14px] shrink-0" viewBox="0 0 16 14"><path d="M8 1H1v4h7M8 9H1v4h7M8 7h7" fill="none" stroke="#aaa"/></svg><span>删除</span></div>
          <div class="w-[74px] flex items-center gap-[3px] shrink-0"><svg class="w-[14px] h-[14px] shrink-0" viewBox="0 0 14 14"><path d="M1 13V1h12" fill="none" stroke="#aaa" stroke-dasharray="2 1"/><path d="M4 13V8M7 13V6M10 13V9" stroke="#aaa"/></svg><span>缩尺配筋</span></div>
          <div class="w-[74px] flex items-center gap-[3px] shrink-0"><svg class="w-[15px] h-[14px] shrink-0" viewBox="0 0 15 14"><path d="M1 10L7 2l7 2-1 8-7 1z" fill="#d8d8d8" stroke="#aaa"/></svg><span>钢筋信息</span></div>
          <div class="w-[75px] flex items-center gap-[4px] shrink-0"><svg class="w-[14px] h-[12px] shrink-0" viewBox="0 0 14 12"><rect x=".5" y=".5" width="13" height="11" fill="#eee" stroke="#aaa"/><path d="M3 4h8M3 7h4" stroke="#aaa"/></svg><span>钢筋图库</span></div>
          <div class="w-[61px] flex items-center gap-[1px] shrink-0 text-[#1a1a1a]"><svg class="w-[15px] h-[13px] shrink-0" viewBox="0 0 15 13"><rect x=".5" y="1.500" width="9" height="10" fill="#fff" stroke="#5a7090"/><path d="M2 4h6M2 7h4" stroke="#5a7090"/><path d="M8 4h3V2l4 4.500-4 4.500V9H8z" fill="#2a70c8"/></svg><span class="ml-[4px]">其他</span><span class="ml-[1px] w-0 h-0 border-x-[3px] border-t-[3px] border-x-transparent border-t-black"></span></div>
          <span class="text-[#1a1a1a] w-[32px] shrink-0">关闭</span>
          <span class="w-px h-[15px] bg-[#c0c0c0] shrink-0"></span>
          <span class="ml-[6px] text-[#1a1a1a]">单构件钢筋总重(kg)：0</span>
        </div>
        <div class="flex-1 bg-white overflow-hidden">
          <div class="grid grid-cols-[34px_72px_56px_36px_33px_201px_166px_156px_61px_38px_40px] h-[39px] grid-rows-[20px_19px]">
            <div class="bg-gradient-to-b from-white to-[#ececec] border-r border-b border-[#b8b8b8]"></div>
            <div class="bg-gradient-to-b from-white to-[#ececec] border-r border-b border-[#b8b8b8] flex items-center justify-center">筋号</div>
            <div class="bg-gradient-to-b from-[#fbdca4] to-[#f2bf68] border-r border-b border-[#b8b8b8] flex items-center justify-center text-[#5a0a70]">直径<span class="font-['Liberation_Mono'] text-[9px]">(mm)</span></div>
            <div class="bg-gradient-to-b from-white to-[#ececec] border-r border-b border-[#b8b8b8] flex items-center justify-center">级别</div>
            <div class="bg-gradient-to-b from-white to-[#ececec] border-r border-b border-[#b8b8b8] flex items-center justify-center">图号</div>
            <div class="bg-gradient-to-b from-white to-[#ececec] border-r border-b border-[#b8b8b8] flex items-center justify-center">图形</div>
            <div class="bg-gradient-to-b from-white to-[#ececec] border-r border-b border-[#b8b8b8] flex items-center justify-center">计算公式</div>
            <div class="bg-gradient-to-b from-white to-[#ececec] border-r border-b border-[#b8b8b8] flex items-center justify-center">公式描述</div>
            <div class="bg-gradient-to-b from-white to-[#ececec] border-r border-b border-[#b8b8b8] flex items-center justify-center">长度<span class="font-['Liberation_Mono'] text-[9px]">(mm)</span></div>
            <div class="bg-gradient-to-b from-white to-[#ececec] border-r border-b border-[#b8b8b8] flex items-center justify-center">根数</div>
            <div class="bg-gradient-to-b from-white to-[#ececec] border-b border-[#b8b8b8] pl-[7px] flex items-center">搭接</div>

            <div class="bg-[#fdd48b] border-b border-[#b8b8b8] flex items-center justify-center text-[#5a0a70] font-['Liberation_Mono'] text-[10px]">1*</div>
            <div class="border-r border-b border-[#b8b8b8] border-r-black"></div>
            <div class="bg-[#dfeefc] border-r border-b border-[#b8b8b8]"></div>
            <div class="border-r border-b border-[#b8b8b8]"></div>
            <div class="border-r border-b border-[#b8b8b8]"></div>
            <div class="border-r border-b border-[#b8b8b8]"></div>
            <div class="border-r border-b border-[#b8b8b8]"></div>
            <div class="border-r border-b border-[#b8b8b8]"></div>
            <div class="border-r border-b border-[#b8b8b8]"></div>
            <div class="border-r border-b border-[#b8b8b8]"></div>
            <div class="border-b border-[#b8b8b8]"></div>
          </div>
        </div>
        <div class="h-[2px] shrink-0 bg-[#c8c8c8]"></div>
      </div>
    </div>
  </div>

  <!-- dialog -->
  <div class="absolute left-[433px] top-[160px] w-[258px] h-[330px] rounded-[6px] border border-[#8a8a8a] bg-gradient-to-b from-[#2a2c2c] via-[#1a1c1c] to-[#202222] flex flex-col">
    <div class="h-[26px] shrink-0 flex items-start relative">
      <div class="ml-[6px] mt-[5px] w-[15px] h-[15px] rounded-[3px] bg-[#1a90f0] flex items-center justify-center"><svg class="w-[11px] h-[11px]" viewBox="0 0 11 11"><path d="M5.500 0v11M0 5.500h11" stroke="#fff" stroke-width="1.300"/><rect x="3" y="3" width="5" height="5" fill="none" stroke="#fff"/></svg></div>
      <span class="ml-[6px] mt-[4px] text-[#1a1a1a] text-[12px] [text-shadow:0_0_5px_#cfcfcf,0_0_5px_#cfcfcf]">识别柱</span>
      <div class="absolute right-[4px] -top-px w-[48px] h-[19px] rounded-b-[3px] border border-t-0 border-[#8a8a8a] flex items-center justify-center"><svg class="w-[9px] h-[8px]" viewBox="0 0 9 8"><path d="M1 0l7 8M8 0L1 8" stroke="#eee" stroke-width="2"/></svg></div>
    </div>
    <div class="mx-[5px] h-[298px] border border-black bg-[#f0f0f0] relative px-[6px] pt-[11px]">
      <div class="h-[238px] border border-[#d8dfe6] rounded-[3px] pt-[23px] pl-[13px] relative">
        <span class="absolute left-[7px] -top-[8px] px-px bg-[#f0f0f0] leading-[14px]">柱属性</span>
        <div class="flex flex-col gap-[5px]">
          <div class="flex items-center h-[20px]"><span class="w-[73px] -mt-[7px]">名称：</span><span class="w-[121px] h-[20px] bg-white border border-[#d0d4dc] rounded-[1px] flex items-center pl-[2px] font-['Liberation_Mono'] text-[10px]">YBZ2</span></div>
          <div class="flex items-center h-[20px]"><span class="w-[73px] -mt-[7px]">截面：</span><span class="w-[121px] h-[20px] bg-white border border-[#d0d4dc] rounded-[1px]"></span></div>
          <div class="flex items-center h-[20px]"><span class="w-[73px] -mt-[7px]">全部纵筋：</span><span class="w-[121px] h-[20px] bg-white border border-[#d0d4dc] rounded-[1px] flex items-center pl-[2px] font-['Liberation_Mono'] text-[10px]">12C16</span></div>
          <div class="flex items-center h-[20px]"><span class="w-[73px] -mt-[7px]">角筋：</span><span class="w-[121px] h-[20px] bg-white border border-[#d0d4dc] rounded-[1px]"></span></div>
          <div class="flex items-center h-[20px]"><span class="w-[73px] -mt-[7px]"><span class="font-['Liberation_Mono'] text-[10px]">B</span>边中部筋：</span><span class="w-[121px] h-[20px] bg-white border border-[#d0d4dc] rounded-[1px]"></span></div>
          <div class="flex items-center h-[20px]"><span class="w-[73px] -mt-[7px]"><span class="font-['Liberation_Mono'] text-[10px]">H</span>边中部筋：</span><span class="w-[121px] h-[20px] bg-white border border-[#d0d4dc] rounded-[1px]"></span></div>
          <div class="flex items-center h-[20px]"><span class="w-[73px] -mt-[7px]">箍筋：</span><span class="w-[121px] h-[20px] bg-white border border-[#d0d4dc] rounded-[1px]"></span></div>
          <div class="flex items-center h-[20px]"><span class="w-[73px] -mt-[7px]">箍筋肢数：</span><span class="w-[121px] h-[20px] bg-white border border-[#d0d4dc] rounded-[1px]"></span></div>
        </div>
      </div>
      <div class="mt-[13px] flex gap-[8px] pl-[53px]">
        <div class="w-[73px] h-[23px] rounded-[2px] border border-[#777] bg-gradient-to-b from-[#f4f4f4] from-50% to-[#d4d4d4] to-50% flex items-center justify-center">确定</div>
        <div class="w-[73px] h-[23px] rounded-[2px] border border-[#777] bg-gradient-to-b from-[#f4f4f4] from-50% to-[#d4d4d4] to-50% flex items-center justify-center">取消</div>
      </div>
    </div>
  </div>

  <!-- network widget -->
  <div class="absolute left-[1163px] top-[650px] w-[60px] h-[42px] rounded-l-[21px] bg-[#2b303b] flex flex-col justify-center text-[12px] leading-[21px] text-[#e8e8e8]">
    <div class="flex items-center"><svg class="ml-[10px] w-[8px] h-[8px]" viewBox="0 0 8 8"><path d="M4 0l4 4H5v4H3V4H0z" fill="#48a8e8"/></svg><span class="ml-[6px]">0.1<span class="text-[#8a8a8a]">K</span></span></div>
    <div class="flex items-center"><svg class="ml-[10px] w-[8px] h-[8px]" viewBox="0 0 8 8"><path d="M4 8l4-4H5V0H3v4H0z" fill="#30a030"/></svg><span class="ml-[16px]">0<span class="text-[#8a8a8a]">K</span></span></div>
  </div>
</div>
</body>
</html>
